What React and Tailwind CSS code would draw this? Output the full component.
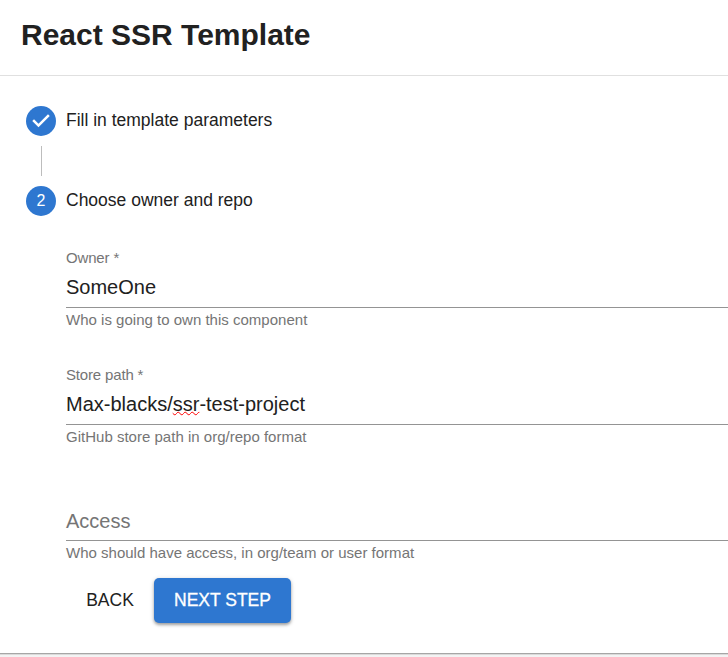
function StepLabel({ icon, children }) {
  return (
    <div className="flex h-[30px] items-center gap-[10px]">
      <div className="flex size-[30px] shrink-0 items-center justify-center rounded-full bg-[#2e77d0] text-[16px] leading-none text-white">
        {icon}
      </div>
      <span className="-mt-[2px] whitespace-nowrap text-[17.5px] leading-[25px]">
        {children}
      </span>
    </div>
  );
}

function Field({ label, value, placeholder, helper }) {
  return (
    <div className="flex flex-col">
      <div className="h-[20px] text-[15px] leading-[20px] tracking-[-0.16px] text-[#757575]">{label}</div>
      <div
        className={`flex items-center border-b border-[#949494] text-[20px] leading-[24px] ${
          value ? "h-[40px] pb-px" : "h-[39px]"
        }`}
      >
        {value || <span className="text-[#757575]">{placeholder}</span>}
      </div>
      <div className="h-[25px] pt-px text-[15px] leading-[21px] tracking-[0.01px] text-[#757575]">{helper}</div>
    </div>
  );
}

export default function App() {
  return (
    <div className="flex h-[657px] w-[728px] flex-col overflow-hidden bg-[#f3f3f3] font-['Liberation_Sans',Arial,sans-serif] text-[#212121]">
      <main className="flex h-[653px] shrink-0 flex-col bg-white">
        <header className="h-[76px] shrink-0 border-b border-[#e0e0e0] pl-[21px] pt-[17px]">
          <h1 className="whitespace-nowrap text-[30px] font-bold leading-[36px]">React SSR Template</h1>
        </header>
        <section className="flex flex-col pl-[26px] pt-[30px]">
          <StepLabel
            icon={
              <svg viewBox="0 0 24 24" className="size-[30px]" fill="#fff">
                <path d="m10 17-5-5 1.41-1.42L10 14.17l7.59-7.59L19 8z" />
              </svg>
            }
          >
            Fill in template parameters
          </StepLabel>
          <div className="my-[10px] ml-[15px] h-[30px] w-px bg-[#bdbdbd]" />
          <StepLabel icon={<span className="-mt-px">2</span>}>Choose owner and repo</StepLabel>
          <div className="flex flex-col pl-[40px] pt-[32px]">
            <div className="flex flex-col gap-[32px]">
              <Field label="Owner *" value="SomeOne" helper="Who is going to own this component" />
              <Field
                label="Store path *"
                value={
                  <span>
                    Max-blacks/
                    <span className="underline decoration-[#ff0000] decoration-wavy decoration-[1.2px] underline-offset-[0px] [text-decoration-skip-ink:none]">
                      ssr
                    </span>
                    -test-project
                  </span>
                }
                helper="GitHub store path in org/repo format"
              />
              <Field placeholder="Access" helper="Who should have access, in org/team or user format" />
            </div>
            <div className="mt-[12px] flex h-[45px] items-center">
              <button className="h-[45px] w-[88px] text-[17.5px]">BACK</button>
              <button className="h-[45px] w-[137px] whitespace-nowrap rounded-[5px] bg-[#2e77d0] text-[17.5px] text-white shadow-[0_2px_3px_rgba(0,0,0,0.3),0_1px_5px_rgba(0,0,0,0.15)] [-webkit-text-stroke:0.3px_white]">
                NEXT STEP
              </button>
            </div>
          </div>
        </section>
      </main>
      <div className="h-px shrink-0 bg-[#a6a6a6]" />
      <div className="h-px shrink-0 bg-[#dadada]" />
    </div>
  );
}
